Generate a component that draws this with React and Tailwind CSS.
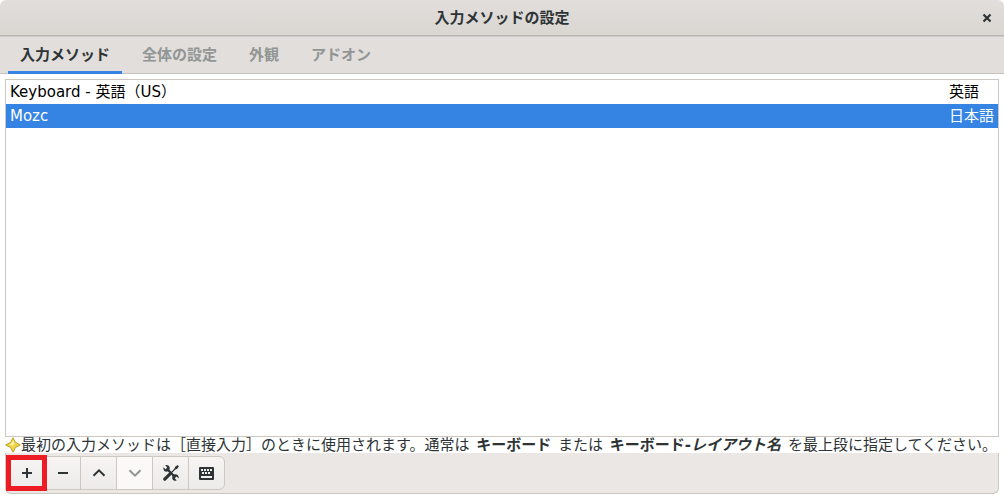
import { useState } from "react";

const tabs = ["入力メソッド", "全体の設定", "外観", "アドオン"];

const methods = [
  { name: "Keyboard - 英語（US）", language: "英語" },
  { name: "Mozc", language: "日本語" },
];

function StarIcon() {
  return (
    <svg className="size-4 shrink-0" viewBox="0 0 16 16" aria-hidden="true">
      <path
        d="M8 .8 10.4 5.4 15.3 8 10.4 10.6 8 15.2 5.6 10.6.7 8 5.6 5.4Z"
        fill="#edd54c"
        stroke="#c0a01c"
        strokeLinejoin="round"
      />
      <path d="M8 3 9.4 6.4 8 8.5 4 8 6.5 6.5Z" fill="#fbf3b0" />
    </svg>
  );
}

function PlusIcon() {
  return (
    <svg className="size-4" viewBox="0 0 16 16" aria-hidden="true">
      <path d="M7 3h2v4h4v2H9v4H7V9H3V7h4Z" fill="currentColor" />
    </svg>
  );
}

function MinusIcon() {
  return (
    <svg className="size-4" viewBox="0 0 16 16" aria-hidden="true">
      <path d="M3 7h10v2H3Z" fill="currentColor" />
    </svg>
  );
}

function UpIcon() {
  return (
    <svg className="size-4" viewBox="0 0 16 16" fill="none" aria-hidden="true">
      <path d="M2.5 10.8 8 5.3l5.5 5.5" stroke="currentColor" strokeWidth="2" />
    </svg>
  );
}

function DownIcon() {
  return (
    <svg className="size-4" viewBox="0 0 16 16" fill="none" aria-hidden="true">
      <path d="M2.5 5.2 8 10.7l5.5-5.5" stroke="currentColor" strokeWidth="2" />
    </svg>
  );
}

function ToolsIcon() {
  return (
    <svg className="size-4" viewBox="0 0 16 16" fill="none" aria-hidden="true">
      <path d="M5 5l6.5 6.5" stroke="currentColor" strokeWidth="2.4" />
      <path
        d="M.3 2.2 2.6 4.2 4.2 2.6 2.2.3C4 -.3 6 .4 6.6 2.2 7.1 4 6.1 6.2 4 6.6 2 7 .1 5.5.3 2.2Z"
        fill="currentColor"
      />
      <path
        d="M15.8 13.6 13.5 11.6 11.8 13.2 13.7 15.6C11.9 16.2 9.9 15.5 9.3 13.7 8.8 11.8 10 9.6 12 9.3 14.2 9 16 10.6 15.8 13.6Z"
        fill="currentColor"
      />
      <path d="M14.6 1.4 7 9" stroke="currentColor" strokeWidth="1.2" />
      <path d="M15.9 1.4 14.6.1 12 2 11.4 4.6 14 4Z" fill="currentColor" />
      <path d="M6.6 9.4 1.8 14.2" stroke="currentColor" strokeWidth="3.2" strokeLinecap="round" />
    </svg>
  );
}

function KeyboardIcon() {
  return (
    <svg className="size-4" viewBox="0 0 16 16" aria-hidden="true">
      <rect x="0" y="2" width="15" height="13" rx="1" fill="currentColor" />
      <path
        d="M2 4h2v2H2zM5 4h2v2H5zM8 4h2v2H8zM11 4h2v2h-2zM3 7h2v2H3zM6 7h2v2H6zM9 7h2v2H9zM2 11h11v2H2z"
        fill="#f2f1ef"
      />
    </svg>
  );
}

const tools = [
  { label: "追加", Icon: PlusIcon, marked: true },
  { label: "削除", Icon: MinusIcon },
  { label: "上へ", Icon: UpIcon },
  { label: "下へ", Icon: DownIcon, disabled: true },
  { label: "設定", Icon: ToolsIcon },
  { label: "キーボード", Icon: KeyboardIcon },
];

export default function App() {
  const [activeTab, setActiveTab] = useState(tabs[0]);
  const [selected, setSelected] = useState("Mozc");

  return (
    <div className="flex h-screen flex-col bg-white pb-[5px] font-['DejaVu_Sans','Noto_Sans_CJK_JP',sans-serif] text-[15px] leading-4 text-[#2e3436]">
      <header className="grid h-9 shrink-0 grid-cols-[1fr_auto_1fr] items-center rounded-t-md border-b border-[#bab5b0] bg-linear-to-b from-[#e1dedb] to-[#dad6d2] px-[7px]">
        <h1 className="col-start-2 font-bold">入力メソッドの設定</h1>
        <button type="button" aria-label="閉じる" className="flex size-5 items-center justify-center justify-self-end">
          <svg className="size-4" viewBox="0 0 16 16" aria-hidden="true">
            <path d="m4.5 4.5 7 7m0-7-7 7" stroke="currentColor" strokeWidth="2.2" />
          </svg>
        </button>
      </header>

      <nav
        role="tablist"
        className="flex h-[38px] shrink-0 gap-2 border-y border-t-[#cdc9c5] border-b-[#c6c2be] bg-[#e1dedb] px-2"
      >
        {tabs.map((tab) => (
          <button
            key={tab}
            type="button"
            role="tab"
            aria-selected={tab === activeTab}
            onClick={() => setActiveTab(tab)}
            className={`-mb-px border-b-3 px-3 pt-px font-bold ${
              tab === activeTab ? "border-[#3584e4]" : "border-transparent text-[#929595]"
            }`}
          >
            {tab}
          </button>
        ))}
      </nav>

      <main className="flex min-h-0 flex-1 flex-col px-[5px] pt-[5px]">
        <div className="min-h-0 flex-1 border border-[#cdc7c2]">
          <table className="w-full text-black">
            <tbody>
              {methods.map((m) => (
                <tr
                  key={m.name}
                  onClick={() => setSelected(m.name)}
                  className={`h-6 ${m.name === selected ? "bg-[#3584e4] text-white" : ""}`}
                >
                  <td className="pl-1">{m.name}</td>
                  <td className="w-[49px] whitespace-nowrap">{m.language}</td>
                </tr>
              ))}
            </tbody>
          </table>
        </div>

        <div className="flex h-4 shrink-0 items-center">
          <StarIcon />
          <p className="whitespace-nowrap">
            最初の入力メソッドは［直接入力］のときに使用されます。通常は <b className="mx-0.5">キーボード</b> または{" "}
            <b className="mx-0.5">
              キーボード-<i>レイアウト名</i>
            </b>{" "}
            を最上段に指定してください。
          </p>
        </div>

        <div className="flex h-[41px] shrink-0 items-center rounded-b-md border border-t-0 border-[#cdc7c2] bg-[#ebe7e4] pl-px">
          <div className="flex h-[34px] rounded-md border border-[#cdc7c2] bg-linear-to-b from-[#f6f5f4] to-[#edebe9]">
            {tools.map(({ label, Icon, marked, disabled }) => (
              <button
                key={label}
                type="button"
                aria-label={label}
                disabled={disabled}
                className={`relative flex w-9 items-center justify-center border-r border-[#cdc7c2] pl-px first:w-[37px] last:w-[35px] last:border-r-0 ${
                  disabled ? "bg-[#faf9f8] text-[#929595]" : ""
                }`}
              >
                <Icon />
                {marked && <span className="absolute -inset-y-0.5 -right-[3px] -left-0.5 z-10 border-5 border-[#ed1c24]" />}
              </button>
            ))}
          </div>
        </div>
      </main>
    </div>
  );
}
